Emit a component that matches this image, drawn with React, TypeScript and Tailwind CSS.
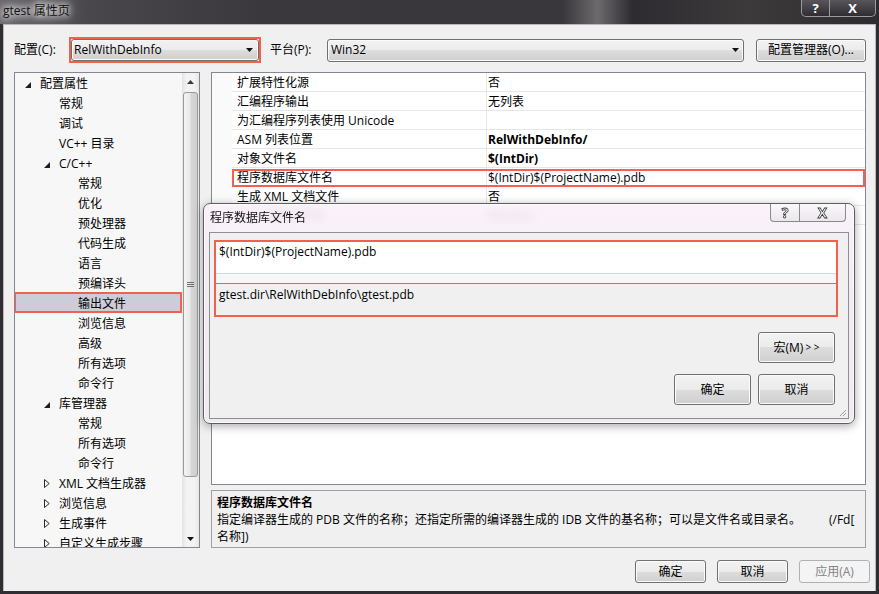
import React from "react";

type TreeItem = { label: string; level: 0 | 1 | 2; exp?: "open" | "closed"; selected?: boolean };

const tree: TreeItem[] = [
  { label: "配置属性", level: 0, exp: "open" },
  { label: "常规", level: 1 },
  { label: "调试", level: 1 },
  { label: "VC++ 目录", level: 1 },
  { label: "C/C++", level: 1, exp: "open" },
  { label: "常规", level: 2 },
  { label: "优化", level: 2 },
  { label: "预处理器", level: 2 },
  { label: "代码生成", level: 2 },
  { label: "语言", level: 2 },
  { label: "预编译头", level: 2 },
  { label: "输出文件", level: 2, selected: true },
  { label: "浏览信息", level: 2 },
  { label: "高级", level: 2 },
  { label: "所有选项", level: 2 },
  { label: "命令行", level: 2 },
  { label: "库管理器", level: 1, exp: "open" },
  { label: "常规", level: 2 },
  { label: "所有选项", level: 2 },
  { label: "命令行", level: 2 },
  { label: "XML 文档生成器", level: 1, exp: "closed" },
  { label: "浏览信息", level: 1, exp: "closed" },
  { label: "生成事件", level: 1, exp: "closed" },
  { label: "自定义生成步骤", level: 1, exp: "closed" },
];

const indent: Record<number, string> = { 0: "pl-[10px]", 1: "pl-[29px]", 2: "pl-[48px]" };

type Prop = { name: string; value: string; bold?: boolean; hl?: boolean };
const props: Prop[] = [
  { name: "扩展特性化源", value: "否" },
  { name: "汇编程序输出", value: "无列表" },
  { name: "为汇编程序列表使用 Unicode", value: "" },
  { name: "ASM 列表位置", value: "RelWithDebInfo/", bold: true },
  { name: "对象文件名", value: "$(IntDir)", bold: true },
  { name: "程序数据库文件名", value: "$(IntDir)$(ProjectName).pdb", hl: true },
  { name: "生成 XML 文档文件", value: "否" },
  { name: "XML 文档文件名", value: "$(IntDir)" },
];

const winBtn =
  "flex items-center justify-center rounded-[3px] border border-[#707070] bg-[linear-gradient(to_bottom,#f2f2f2_0%,#ebebeb_50%,#dddddd_50%,#cfcfcf_100%)] shadow-[inset_0_0_0_1px_#fbfbfb]";

function DownArrow() {
  return (
    <svg width="7" height="4" viewBox="0 0 7 4">
      <path d="M0 0H7L3.5 4Z" fill="#111" />
    </svg>
  );
}

function Triangle({ exp }: { exp?: "open" | "closed" }) {
  if (exp === "open")
    return (
      <svg width="6" height="6" viewBox="0 0 6 6" className="mt-[3px]">
        <path d="M6 0V6H0Z" fill="#1e1e1e" />
      </svg>
    );
  if (exp === "closed")
    return (
      <svg width="6" height="9" viewBox="0 0 6 9" className="mt-[1px]">
        <path d="M0.5 0.5L5.2 4.5L0.5 8.5Z" fill="none" stroke="#2a2a2a" strokeWidth="1" />
      </svg>
    );
  return null;
}

export default function App() {
  return (
    <div className="relative flex h-[594px] w-[879px] flex-col overflow-hidden bg-[#2f2d31] font-['Open_Sans','Noto_Sans_CJK_SC',sans-serif] text-[12px] text-black">
      {/* Title bar */}
      <div className="flex h-[24px] shrink-0 items-start bg-[linear-gradient(to_right,#6a676c_0%,#4a474c_10%,#3b383d_30%,#3a373c_64%,#6d6a6e_68%,#2d2b30_72%,#3c3a3a_85%,#2d2b2f_100%)] px-[3px]">
        <div className="mt-[1px] leading-[20px] text-[#111] [text-shadow:0_0_6px_#fff,0_0_10px_#fff,0_0_14px_rgba(255,255,255,0.8)]">
          gtest 属性页
        </div>
        <div className="ml-auto flex h-[17px] overflow-hidden rounded-b-[5px] border border-t-0 border-[#9c9a9e] bg-[linear-gradient(to_bottom,#58555b,#2f2d32)]">
          <div className="flex w-[28px] items-center justify-center border-r border-[#9c9a9e] text-[13px] font-bold leading-[16px] text-white">
            ?
          </div>
          <div className="flex w-[45px] items-center justify-center text-[13px] font-bold leading-[16px] text-white">
            X
          </div>
        </div>
      </div>

      {/* Client */}
      <div className="mx-[3px] mb-[3px] flex min-h-0 flex-1 flex-col border-x border-t border-[#b9b9b9] bg-[#f0f0f0]">
        {/* Config row */}
        <div className="mt-[12px] flex h-[26px] shrink-0 items-center pl-[10px]">
          <div className="w-[55px] shrink-0">配置(C):</div>
          <div className="h-[26px] w-[192px] shrink-0 border-2 border-[#f2604e]">
            <div className={"h-full w-full !justify-start pl-[2px] pr-[5px] " + winBtn}>
              <span className="flex-1">RelWithDebInfo</span>
              <DownArrow />
            </div>
          </div>
          <div className="ml-[9px] w-[57px] shrink-0">平台(P):</div>
          <div className={"h-[23px] w-[417px] shrink-0 !justify-start pl-[3px] pr-[4px] " + winBtn}>
            <span className="flex-1">Win32</span>
            <DownArrow />
          </div>
          <div className={"ml-[12px] h-[23px] w-[110px] shrink-0 " + winBtn}>配置管理器(O)...</div>
        </div>

        {/* Main */}
        <div className="mt-[9px] flex h-[476px] shrink-0 gap-[11px] pl-[10px] pr-[9px]">
          {/* Tree */}
          <div className="flex w-[186px] shrink-0 border border-[#828790] bg-[#f7f7f7]">
            <div className="min-w-0 flex-1 overflow-hidden">
              {tree.map((t, i) => (
                <div key={i} className={"relative flex h-[20px] items-center " + indent[t.level] + (t.selected ? " bg-[#cbcdd9]" : "")}>
                  <div className="flex w-[15px] shrink-0 items-center">
                    <Triangle exp={t.exp} />
                  </div>
                  <span className="whitespace-nowrap pt-[1px] leading-[20px]">{t.label}</span>
                  {t.selected && <div className="absolute -left-[1px] -top-[1px] bottom-0 right-0 border-2 border-[#f2604e]" />}
                </div>
              ))}
            </div>
            {/* Scrollbar */}
            <div className="flex w-[17px] shrink-0 flex-col bg-[linear-gradient(to_right,#e3e3e3,#f3f3f3_25%,#f3f3f3_75%,#e6e6e6)]">
              <div className="flex h-[17px] items-center justify-center">
                <svg width="7" height="4" viewBox="0 0 7 4">
                  <path d="M0 4H7L3.5 0Z" fill="#3a3a3a" />
                </svg>
              </div>
              <div className="mx-[1px] mt-[2px] flex h-[385px] items-center justify-center rounded-[3px] border border-[#9a9a9a] bg-[linear-gradient(to_right,#f4f4f4,#e9e9e9_45%,#d6d6d6_55%,#cfcfcf)]">
                <div className="flex flex-col gap-[1px]">
                  <div className="h-px w-[7px] bg-[#6f6f6f]" />
                  <div className="h-px w-[7px] bg-[#6f6f6f]" />
                  <div className="h-px w-[7px] bg-[#6f6f6f]" />
                </div>
              </div>
              <div className="flex-1" />
              <div className="flex h-[17px] items-center justify-center">
                <DownArrow />
              </div>
            </div>
          </div>

          {/* Right side */}
          <div className="flex min-w-0 flex-1 flex-col gap-[5px]">
            <div className="flex h-[413px] shrink-0 flex-col border border-[#828790] bg-white">
              {props.map((p, i) => (
                <div key={i} className="relative flex h-[19px]">
                  <div className="w-[20px] shrink-0 bg-[#fafafa]" />
                  <div className="w-[255px] shrink-0 whitespace-nowrap border-b border-r border-[#e6e6e6] pl-[5px] pt-[1px] leading-[18px]">{p.name}</div>
                  <div className={"flex-1 whitespace-nowrap border-b border-[#e6e6e6] pl-[1px] pt-[1px] leading-[18px]" + (p.bold ? " font-bold" : "")}>{p.value}</div>
                  {p.hl && <div className="absolute bottom-0 left-[20px] right-0 top-[1px] border-2 border-[#f2604e]" />}
                </div>
              ))}
            </div>
            <div className="flex-1 overflow-hidden border border-[#a0a0a0] bg-[#f0f0f0] px-[5px] pt-[3px] leading-[17px]">
              <div className="font-bold">程序数据库文件名</div>
              <div className="flex whitespace-nowrap">
                <span>指定编译器生成的 PDB 文件的名称；还指定所需的编译器生成的 IDB 文件的基名称；可以是文件名或目录名。</span>
                <span className="ml-[28px]">(/Fd[</span>
              </div>
              <div>名称])</div>
            </div>
          </div>
        </div>

        {/* Bottom buttons */}
        <div className="mt-[12px] flex justify-end gap-[11px] pr-[5px]">
          <div className={"h-[23px] w-[71px] " + winBtn}>确定</div>
          <div className={"h-[23px] w-[71px] " + winBtn}>取消</div>
          <div className="flex h-[23px] w-[71px] items-center justify-center rounded-[3px] border border-[#adb2b5] bg-[#f4f4f4] text-[#838383]">
            应用(A)
          </div>
        </div>
      </div>

      {/* Dialog */}
      <div className="absolute left-[203px] top-[203px] flex h-[221px] w-[652px] flex-col rounded-[7px] border border-[#5e5e5e] bg-[linear-gradient(to_bottom,rgba(250,240,250,0.88),rgba(242,234,243,0.93)_40%,rgba(240,233,241,0.95))] shadow-[0_2px_10px_rgba(0,0,0,0.35),inset_0_0_0_1px_rgba(255,255,255,0.75)] backdrop-blur-[4px]">
        <div className="flex h-[28px] items-start">
          <div className="ml-[6px] mt-[5px] leading-[18px] text-[#111]">程序数据库文件名</div>
          <div className="ml-auto mr-[8px] flex h-[18px] overflow-hidden rounded-b-[4px] border border-t-0 border-[#8a8a8a] bg-[linear-gradient(to_bottom,#fbf7fb,#ece6ee)]">
            <div className="flex w-[29px] items-center justify-center border-r border-[#8a8a8a] text-[14px] font-bold leading-[16px] text-white [-webkit-text-stroke:0.8px_#3a3a3a]">
              ?
            </div>
            <div className="flex w-[45px] items-center justify-center text-[14px] font-bold leading-[16px] text-white [-webkit-text-stroke:0.8px_#3a3a3a]">
              X
            </div>
          </div>
        </div>
        <div className="relative ml-[5px] flex h-[187px] w-[640px] flex-col border border-[#8e8f8f] bg-[#f0f0f0] pl-[4px] pt-[7px]">
          <div className="flex h-[77px] w-[624px] flex-col border-2 border-[#f2604e]">
            <div className="h-[31px] bg-white pl-[3px] pt-[1px] leading-[18px]">$(IntDir)$(ProjectName).pdb</div>
            <div className="h-px bg-[#c6dcee]" />
            <div className="h-[9px] bg-[#f6f6f6]" />
            <div className="h-px bg-[#6f8fad]" />
            <div className="flex-1 bg-[#f0f0f0] pl-[3px] pt-[2px] leading-[18px]">gtest.dir\RelWithDebInfo\gtest.pdb</div>
          </div>
          <div className="mt-[15px] flex justify-end pr-[13px]">
            <div className={"h-[31px] w-[77px] " + winBtn}>
              宏(M)<span className="ml-[2px] text-[10px]">&gt; &gt;</span>
            </div>
          </div>
          <div className="mt-[11px] flex justify-end gap-[7px] pr-[13px]">
            <div className={"h-[31px] w-[77px] " + winBtn}>确定</div>
            <div className={"h-[31px] w-[77px] " + winBtn}>取消</div>
          </div>
          <svg width="9" height="9" viewBox="0 0 9 9" className="absolute bottom-[1px] right-[1px]">
            <path d="M8 2L2 8M8 5L5 8M8 8L8 8" stroke="#a0a0a0" strokeWidth="1" />
          </svg>
        </div>
      </div>
    </div>
  );
}
